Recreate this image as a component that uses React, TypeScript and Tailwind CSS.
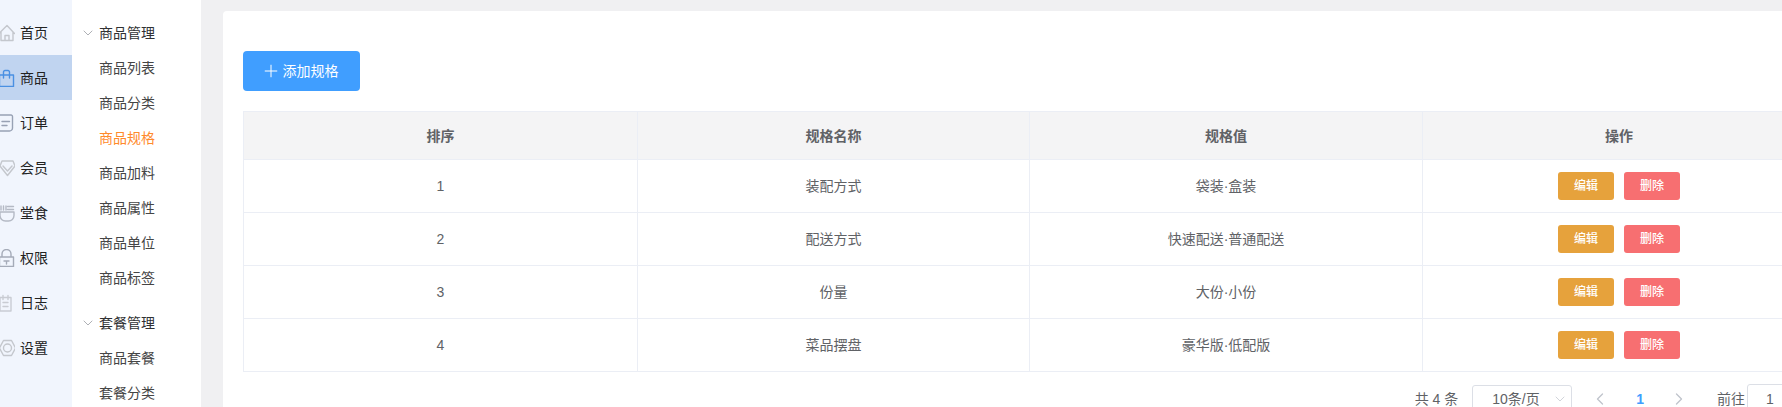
import { ChevronDown, ChevronLeft, ChevronRight, Plus } from 'lucide-react'
import type { ReactNode } from 'react'

const stroke = { fill: 'none', stroke: 'currentColor', strokeWidth: 1.4, strokeLinejoin: 'round', strokeLinecap: 'round' } as const

// icons sit in an 18px box, the rail crops a little of their left side
const railItems: { label: string; icon: ReactNode; tone: string; active?: boolean }[] = [
  { label: '首页', tone: 'text-[#c4c7cd]', icon: <path d="M2 9.5 10 1.5l7.5 8M4 8v8.5h12V8M8 16.5v-5h4v5" {...stroke} /> },
  { label: '商品', tone: 'text-[#4a90e2]', active: true, icon: <path d="M2.5 6h14v11.5h-14zM6.5 9V3a1.5 1.5 0 0 1 1.5-1.5h3A1.5 1.5 0 0 1 12.500 3v6" {...stroke} /> },
  { label: '订单', tone: 'text-[#98a1b4]', icon: <path d="M3 1h11a1.5 1.500 0 0 1 1.500 1.500V14a3 3 0 0 1-3 3H3.500A1.500 1.500 0 0 1 2 15.500V2a1 1 0 0 1 1-1zM5 7.500h7.500M5 11.500h5" {...stroke} /> },
  { label: '会员', tone: 'text-[#c4c7cd]', icon: <path d="M5 2h11l2 5-7.500 9.500L3 7zM6 7l4.500 5L15 7" {...stroke} /> },
  { label: '堂食', tone: 'text-[#b4b9c4]', icon: <path d="M3 8h14v3.500a5.500 5.500 0 0 1-5.500 5.500h-3A5.500 5.500 0 0 1 3 11.500zM4 2v4M6.500 2v4M9 2v4M10.500 2.500h6M10.500 5.500h6" {...stroke} /> },
  { label: '权限', tone: 'text-[#a5abb8]', icon: <path d="M2.500 8h14v9.500h-14zM5 8V5a4.500 4.500 0 0 1 9 0v3M7 12h5M9.500 12v3" {...stroke} /> },
  { label: '日志', tone: 'text-[#c9ccd3]', icon: <path d="M3 3.500h11v13.500H3zM6 1.500v4M11 1.500v4M6 8.500h5M6 12.500h5" {...stroke} /> },
  { label: '设置', tone: 'text-[#c4c7cd]', icon: <path d="M6.500 1.500h8l4 7.500-4 7.500h-8L2.500 9zM10.500 5a4 4 0 1 1 0 8 4 4 0 0 1 0-8z" {...stroke} /> },
]

const subItems = ['商品列表', '商品分类', '商品规格', '商品加料', '商品属性', '商品单位', '商品标签']
const rows = [
  ['1', '装配方式', '袋装·盒装'],
  ['2', '配送方式', '快速配送·普通配送'],
  ['3', '份量', '大份·小份'],
  ['4', '菜品摆盘', '豪华版·低配版'],
]

function SubGroup({ title, items }: { title: string; items: string[] }) {
  return (
    <div className="mb-[10px]">
      <div className="flex h-[35px] items-center pl-2 text-[#303133]">
        <ChevronDown size={16} strokeWidth={1.1} className="mr-[3px] text-[#909399]" />
        {title}
      </div>
      {items.map((item) => (
        <div key={item} className={`flex h-[35px] items-center pl-[27px] ${item === '商品规格' ? 'text-[#ff8a2b]' : 'text-[#454545]'}`}>
          {item}
        </div>
      ))}
    </div>
  )
}

export default function App() {
  return (
    <div className="flex h-[407px] w-[1782px] overflow-hidden bg-[#f0f0f2] font-['Liberation_Sans','Noto_Sans_CJK_SC',sans-serif] text-sm">
      {/* Icon rail */}
      <div className="w-[72px] shrink-0 bg-[#f1f5fd] pt-[10px]">
        {railItems.map((item) => (
          <div key={item.label} className={`flex h-[45px] items-center gap-[5px] ${item.tone} ${item.active ? 'bg-[#c0d4f0]' : ''}`}>
            <svg viewBox="0 0 18 18" className="ml-[-3px] h-[18px] w-[18px] shrink-0">{item.icon}</svg>
            <span className="text-[#222]">{item.label}</span>
          </div>
        ))}
      </div>

      {/* Sub menu */}
      <div className="w-[129px] shrink-0 bg-white pt-[15px]">
        <SubGroup title="商品管理" items={subItems} />
        <SubGroup title="套餐管理" items={['商品套餐', '套餐分类']} />
      </div>

      {/* Content */}
      <div className="min-w-0 flex-1 pl-[22px] pt-[11px]">
        <div className="w-[1640px] rounded-t-[4px] bg-white pl-5 pt-10">
          <button className="flex h-10 w-[117px] items-center justify-center gap-[6px] rounded-[4px] bg-[#409eff] text-white">
            <Plus size={20} strokeWidth={1.2} className="-mx-[4px]" />
            添加规格
          </button>

          <table className="mt-5 w-[1572px] table-fixed border-collapse border border-[#ebeef5] text-center text-[#606266]">
            <colgroup>
              <col className="w-[394px]" />
              <col className="w-[392px]" />
              <col className="w-[393px]" />
              <col className="w-[393px]" />
            </colgroup>
            <thead>
              <tr className="h-[48px] bg-[#f4f4f5]">
                {['排序', '规格名称', '规格值', '操作'].map((head) => (
                  <th key={head} className="border border-[#ebeef5] font-bold">{head}</th>
                ))}
              </tr>
            </thead>
            <tbody>
              {rows.map((row) => (
                <tr key={row[0]} className="h-[53px]">
                  {row.map((cell) => (
                    <td key={cell} className="border border-[#ebeef5]">{cell}</td>
                  ))}
                  <td className="border border-[#ebeef5]">
                    <div className="flex justify-center gap-[10px]">
                      <button className="h-7 w-14 rounded-[3px] bg-[#e6a23c] text-xs font-medium text-white">编辑</button>
                      <button className="h-7 w-14 rounded-[3px] bg-[#f76f71] text-xs font-medium text-white">删除</button>
                    </div>
                  </td>
                </tr>
              ))}
            </tbody>
          </table>

          {/* Pagination */}
          <div className="mt-3 flex w-[1572px] items-center justify-end pr-[22px] leading-none text-[#606266]">
            <span className="mb-[5px]">共 4 条</span>
            <div className="ml-[14px] flex h-8 w-[100px] items-center justify-between rounded-[3px] border border-[#dcdfe6] pb-[5px] pl-[19px] pr-[2px]">
              10条/页
              <ChevronDown size={16} strokeWidth={1.1} className="mr-[1px] text-[#c0c4cc]" />
            </div>
            <ChevronLeft size={20} strokeWidth={1.6} className="mb-[5px] ml-[18px] text-[#c0c4cc]" />
            <span className="mb-[5px] ml-[26px] mr-[25px] font-bold text-[#409eff]">1</span>
            <ChevronRight size={20} strokeWidth={1.6} className="mb-[5px] text-[#c0c4cc]" />
            <span className="mb-[5px] ml-[28px]">前往</span>
            <div className="ml-[2px] flex h-[34px] w-[46px] items-center justify-center rounded-[3px] border border-[#dcdfe6] pb-[5px]">1</div>
          </div>
        </div>
      </div>
    </div>
  )
}
